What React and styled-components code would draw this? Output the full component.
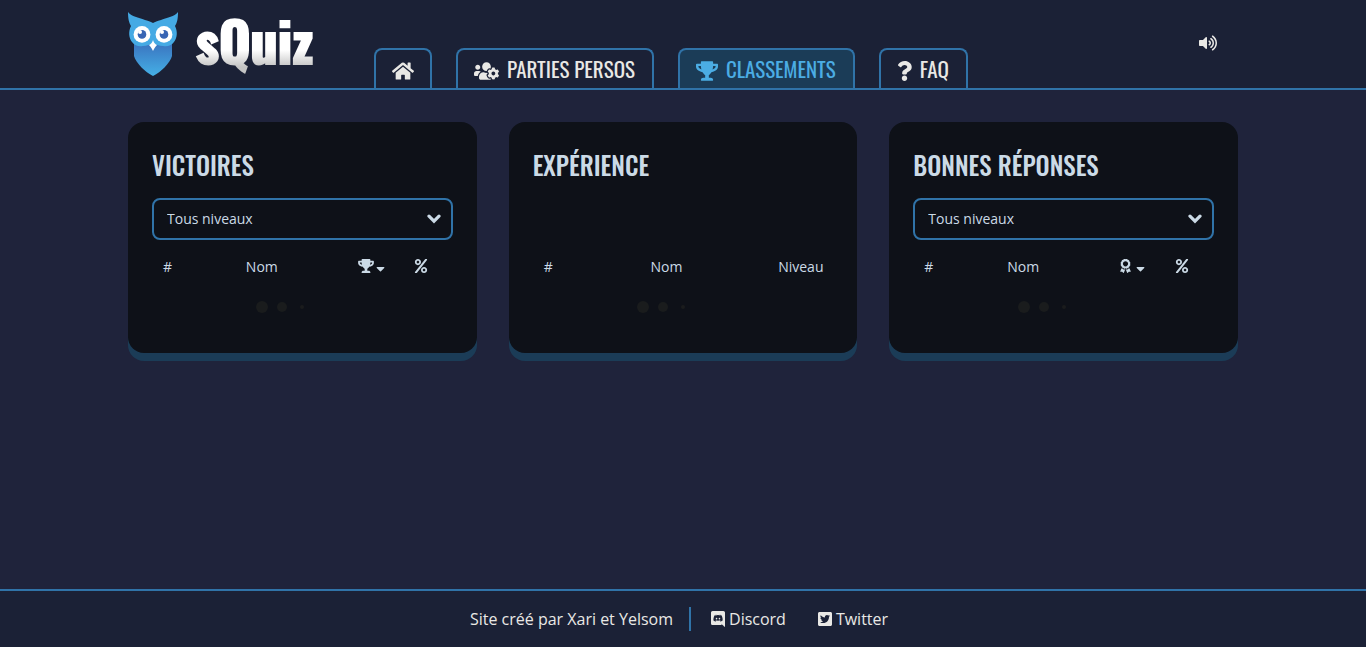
import React from "react";
import styled, { createGlobalStyle } from "styled-components";
import {
  FaHome,
  FaUsersCog,
  FaTrophy,
  FaQuestion,
  FaVolumeUp,
  FaSortDown,
  FaPercent,
  FaAward,
  FaTwitterSquare,
} from "react-icons/fa";

const color = {
  page: "#1f233b",
  bar: "#1b2136",
  line: "#3073a8",
  active: "#1b3c57",
  sky: "#4bade4",
  light: "#e9e8e5",
  pale: "#cbdae6",
  card: "#0e1118",
};

const display = `Oswald, "Liberation Sans Narrow", sans-serif`;

const GlobalStyle = createGlobalStyle`
  * { box-sizing: border-box; }
  body {
    margin: 0;
    background: ${color.page};
    color: ${color.light};
    font-family: "Open Sans", sans-serif;
    font-size: 16px;
    line-height: 24px;
  }
`;

const Page = styled.div`
  display: flex;
  flex-direction: column;
  min-height: 100vh;
`;

const Icon = styled.span`
  display: flex;
  flex-shrink: 0;
  width: ${(p) => p.$w}px;
  height: ${(p) => p.$h}px;

  svg {
    width: 100%;
    height: 100%;
  }
`;

const Header = styled.header`
  background: ${color.bar};
  border-bottom: 2px solid ${color.line};
`;

const Container = styled.div`
  width: 100%;
  max-width: 1110px;
  margin: 0 auto;
`;

const HeaderRow = styled(Container)`
  display: flex;
  height: 88px;
`;

const Logo = styled.a`
  display: flex;
  flex-shrink: 0;
  align-items: center;
  gap: 16px;
  width: 194px;
  margin-right: 52px;
  text-decoration: none;

  svg {
    flex-shrink: 0;
  }
`;

const Wordmark = styled.span`
  padding: 0 2px 8px;
  font-family: ${display};
  font-weight: 700;
  font-size: 54px;
  line-height: 80px;
  color: transparent;
  background: linear-gradient(#fff 57%, #c4c4c4 76%);
  background-clip: text;
  -webkit-text-stroke: 2px transparent;
`;

const Nav = styled.nav`
  display: flex;
  align-items: flex-end;
  gap: 24px;
`;

const Tab = styled.a`
  display: flex;
  align-items: center;
  gap: 8px;
  height: 40px;
  padding: 4px 16px 0;
  border: 2px solid ${color.line};
  border-bottom: 0;
  border-radius: 8px 8px 0 0;
  background: ${(p) => (p.$active ? color.active : "transparent")};
  color: ${(p) => (p.$active ? color.sky : color.light)};
  font-family: ${display};
  font-weight: 400;
  font-size: 21px;
  text-decoration: none;
  text-transform: uppercase;
  white-space: nowrap;
`;

const TabLabel = styled.span`
  padding: 0 1px 4px 0;
`;

const SoundButton = styled.button`
  align-self: center;
  margin-left: auto;
  margin-right: 21px;
  padding: 0 0 2px;
  border: 0;
  background: none;
  color: ${color.light};
`;

const Main = styled(Container).attrs({ as: "main" })`
  flex: 1;
  display: grid;
  grid-template-columns: repeat(3, 1fr);
  align-items: start;
  gap: 32px;
  padding: 32px 0;
`;

const Card = styled.section`
  display: flex;
  flex-direction: column;
  padding: 24px;
  border-radius: 16px;
  background: ${color.card};
  box-shadow: 0 8px 0 ${color.active};
  color: ${color.pale};
`;

const CardTitle = styled.h2`
  margin: 0 0 14px;
  font-family: ${display};
  font-weight: 500;
  font-size: 25px;
  line-height: 38px;
  text-transform: uppercase;
`;

const Filter = styled.div`
  display: grid;
  align-items: center;
  height: 42px;
  margin-bottom: 8px;

  > * {
    grid-area: 1 / 1;
  }

  svg {
    justify-self: end;
    margin-right: 12px;
    pointer-events: none;
  }
`;

const Select = styled.select`
  appearance: none;
  width: 100%;
  height: 42px;
  padding: 0 13px 2px;
  border: 2px solid ${color.line};
  border-radius: 8px;
  background: transparent;
  color: inherit;
  font-family: inherit;
  font-size: 14px;
`;

const Ranking = styled.table`
  width: 100%;
  table-layout: fixed;
  border-collapse: collapse;
  font-size: 14px;
`;

const LevelRanking = styled(Ranking)`
  margin-top: 50px;
`;

const HeadCell = styled.th`
  width: ${(p) => (p.$width ? `${p.$width}px` : "auto")};
  height: 37px;
  padding: ${(p) => (p.$first ? "0 0 0 11px" : "0")};
  text-align: ${(p) => (p.$first ? "left" : "center")};
  font-weight: 500;
  white-space: nowrap;
`;

const HeadIcons = styled.span`
  display: flex;
  align-items: center;
  justify-content: center;
  gap: ${(p) => p.$gap || 0}px;
  padding-bottom: 2px;
`;

const SortIcons = styled(HeadIcons)`
  padding-left: 3px;
`;

const Loader = styled.div`
  display: flex;
  align-self: center;
  align-items: center;
  width: 100px;
  height: 44px;
`;

const DotSlot = styled.span`
  display: flex;
  justify-content: center;
  width: 20px;
`;

const Dot = styled.span`
  width: ${(p) => p.$size}px;
  height: ${(p) => p.$size}px;
  border-radius: 50%;
  background: #1a1c1d;
`;

const Footer = styled.footer`
  display: flex;
  align-items: center;
  justify-content: center;
  height: 58px;
  padding-right: 8px;
  border-top: 2px solid ${color.line};
  background: ${color.bar};
`;

const Credit = styled.span`
  margin-right: 20px;
  padding-right: 16px;
  border-right: 2px solid ${color.line};
`;

const Social = styled.a`
  display: flex;
  align-items: center;
  gap: 4px;
  margin-left: ${(p) => (p.$spaced ? "32px" : "0")};
  color: inherit;
  text-decoration: none;
`;

function Owl() {
  return (
    <svg width="50" height="64" viewBox="0 0 50 64" aria-hidden="true">
      <defs>
        <linearGradient id="owlBody" x1="0" y1="0" x2="0" y2="1">
          <stop offset="0.1" stopColor="#3b78c2" />
          <stop offset="1" stopColor="#45b0e6" />
        </linearGradient>
      </defs>
      <path d="M6 30H44V44C42 51 33 60 25 64C17 60 8 51 6 44Z" fill="url(#owlBody)" />
      <path
        d="M0 0C4 5 10 5 17 8C21 9 23 10 25 11C27 10 29 9 33 8C40 5 46 5 50 0C50 7 49 11 47 14C50 20 49 26 46 30C43 34 39 35 35 34C31 34 28 32 25 32C22 32 19 34 15 34C11 35 7 34 4 30C1 26 0 20 3 14C1 11 0 7 0 0Z"
        fill="#45aae4"
      />
      <circle cx="14" cy="22.4" r="8.4" fill="#fff" />
      <circle cx="36" cy="22.4" r="8.4" fill="#fff" />
      <circle cx="14" cy="22.4" r="4.3" fill="#3765b4" />
      <circle cx="36" cy="22.4" r="4.3" fill="#3765b4" />
      <circle cx="12" cy="20" r="2" fill="#fff" />
      <circle cx="34" cy="20" r="2" fill="#fff" />
      <path d="M25 28C26 31 27 32 29 33C27 35 26 37 25 39C24 37 23 35 21 33C23 32 24 31 25 28Z" fill="#fff" />
    </svg>
  );
}

function DiscordIcon() {
  return (
    <svg viewBox="0 0 448 512" fill="currentColor" aria-hidden="true">
      <path d="M297.216 243.2c0 15.616-11.52 28.416-26.112 28.416-14.336 0-26.112-12.8-26.112-28.416s11.52-28.416 26.112-28.416c14.592 0 26.112 12.8 26.112 28.416zm-119.552-28.416c-14.592 0-26.112 12.8-26.112 28.416s11.776 28.416 26.112 28.416c14.592 0 26.112-12.8 26.112-28.416.256-15.616-11.52-28.416-26.112-28.416zM448 52.736V512c-64.494-56.994-43.868-38.128-118.784-107.776l13.568 47.36H52.48C23.552 451.584 0 428.032 0 398.848V52.736C0 23.552 23.552 0 52.48 0h343.04C424.448 0 448 23.552 448 52.736zm-72.96 242.688c0-82.432-36.864-149.248-36.864-149.248-36.864-27.648-71.936-26.88-71.936-26.88l-3.584 4.096c43.52 13.312 63.744 32.512 63.744 32.512-60.811-33.329-132.244-33.335-191.232-7.424-9.472 4.352-15.104 7.424-15.104 7.424s21.248-20.224 67.328-33.536l-2.56-3.072s-35.072-.768-71.936 26.88c0 0-36.864 66.816-36.864 149.248 0 0 21.504 37.12 78.08 38.912 0 0 9.472-11.52 17.152-21.248-32.512-9.728-44.8-30.208-44.8-30.208 3.766 2.636 9.976 6.053 10.496 6.4 43.21 24.198 104.588 32.126 159.744 8.96 8.96-3.328 18.944-8.192 29.44-15.104 0 0-12.8 20.992-46.336 30.464 7.68 9.728 16.896 20.736 16.896 20.736 56.576-1.792 78.336-38.912 78.336-38.912z" />
    </svg>
  );
}

function Chevron() {
  return (
    <svg width="14" height="10" viewBox="0 0 14 10" fill="none" aria-hidden="true">
      <path d="M2 2.2L7 7.2L12 2.2" stroke="currentColor" strokeWidth="3.2" strokeLinecap="round" />
    </svg>
  );
}

function LevelFilter({ label }) {
  return (
    <Filter>
      <Select aria-label={label} defaultValue="all">
        <option value="all">Tous niveaux</option>
      </Select>
      <Chevron />
    </Filter>
  );
}

function Loading() {
  return (
    <Loader role="status" aria-label="Chargement">
      {[12, 10, 4].map((size) => (
        <DotSlot key={size}>
          <Dot $size={size} />
        </DotSlot>
      ))}
    </Loader>
  );
}

function ScoreHead({ icon, gap }) {
  return (
    <Ranking>
      <thead>
        <tr>
          <HeadCell $first $width={21}>#</HeadCell>
          <HeadCell>Nom</HeadCell>
          <HeadCell $width={38}>
            <SortIcons $gap={gap}>
              {icon}
              <Icon $w={9} $h={14}><FaSortDown /></Icon>
            </SortIcons>
          </HeadCell>
          <HeadCell $width={64}>
            <HeadIcons>
              <Icon $w={14} $h={14}><FaPercent /></Icon>
            </HeadIcons>
          </HeadCell>
        </tr>
      </thead>
    </Ranking>
  );
}

export default function App() {
  return (
    <Page>
      <GlobalStyle />
      <Header>
        <HeaderRow>
          <Logo href="#">
            <Owl />
            <Wordmark>sQuiz</Wordmark>
          </Logo>
          <Nav>
            <Tab href="#" aria-label="Accueil">
              <Icon $w={22} $h={20}><FaHome /></Icon>
            </Tab>
            <Tab href="#">
              <Icon $w={25} $h={20}><FaUsersCog /></Icon>
              <TabLabel>Parties persos</TabLabel>
            </Tab>
            <Tab href="#" $active>
              <Icon $w={22} $h={20}><FaTrophy /></Icon>
              <TabLabel>Classements</TabLabel>
            </Tab>
            <Tab href="#">
              <Icon $w={15} $h={20}><FaQuestion /></Icon>
              <TabLabel>FAQ</TabLabel>
            </Tab>
          </Nav>
          <SoundButton type="button" aria-label="Son">
            <Icon $w={18} $h={16}><FaVolumeUp /></Icon>
          </SoundButton>
        </HeaderRow>
      </Header>

      <Main>
        <Card>
          <CardTitle>Victoires</CardTitle>
          <LevelFilter label="Niveau des victoires" />
          <ScoreHead icon={<Icon $w={16} $h={14}><FaTrophy /></Icon>} gap={2} />
          <Loading />
        </Card>
        <Card>
          <CardTitle>Expérience</CardTitle>
          <LevelRanking>
            <thead>
              <tr>
                <HeadCell $first $width={32}>#</HeadCell>
                <HeadCell>Nom</HeadCell>
                <HeadCell $width={65}>Niveau</HeadCell>
              </tr>
            </thead>
          </LevelRanking>
          <Loading />
        </Card>
        <Card>
          <CardTitle>Bonnes réponses</CardTitle>
          <LevelFilter label="Niveau des bonnes réponses" />
          <ScoreHead icon={<Icon $w={11} $h={14}><FaAward /></Icon>} gap={5} />
          <Loading />
        </Card>
      </Main>

      <Footer>
        <Credit>Site créé par Xari et Yelsom</Credit>
        <Social href="#">
          <Icon $w={14} $h={16}><DiscordIcon /></Icon>
          Discord
        </Social>
        <Social href="#" $spaced>
          <Icon $w={14} $h={16}><FaTwitterSquare /></Icon>
          Twitter
        </Social>
      </Footer>
    </Page>
  );
}
